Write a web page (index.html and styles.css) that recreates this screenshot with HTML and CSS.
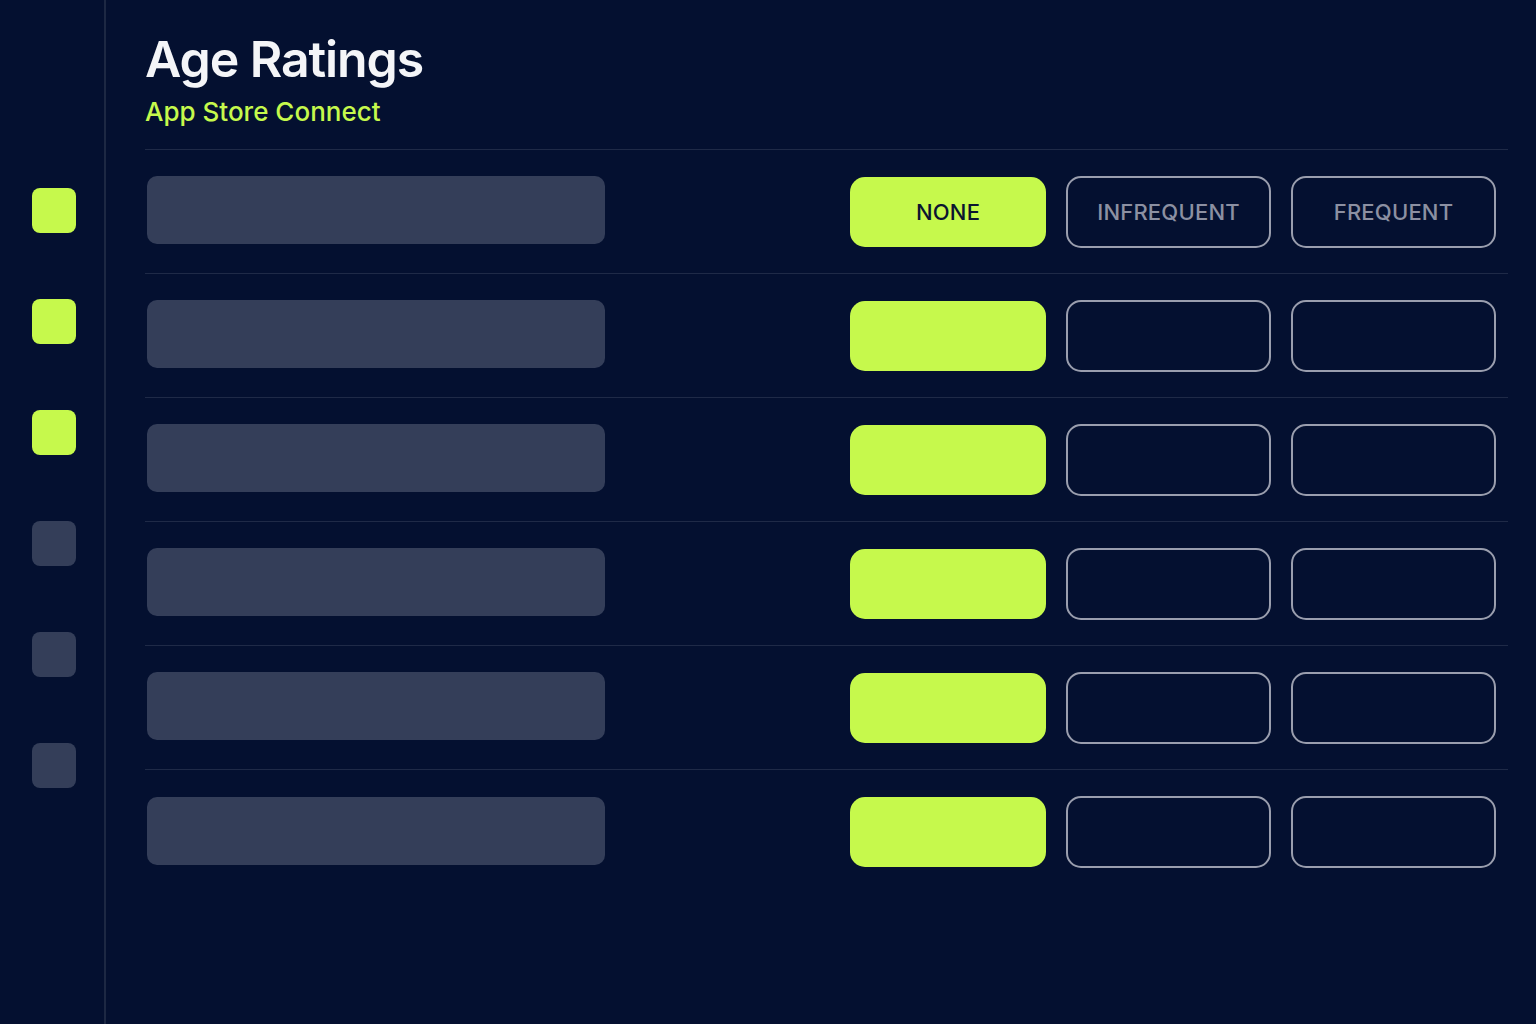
FILE: index.html
```html
<!DOCTYPE html>
<html>
<head>
<meta charset="utf-8">
<link rel="stylesheet" href="styles.css">
</head>
<body>
<div class="app">
  <aside class="sidebar">
    <div class="nav-sq on"></div>
    <div class="nav-sq on"></div>
    <div class="nav-sq on"></div>
    <div class="nav-sq"></div>
    <div class="nav-sq"></div>
    <div class="nav-sq"></div>
  </aside>
  <main class="main">
    <header class="header">
      <h1 class="title">Age Ratings</h1>
      <div class="subtitle">App Store Connect</div>
    </header>
    <section class="rows">
      <div class="row">
        <div class="bar"></div>
        <div class="opts">
          <div class="opt sel">NONE</div>
          <div class="opt out">INFREQUENT</div>
          <div class="opt out">FREQUENT</div>
        </div>
      </div>
      <div class="row">
        <div class="bar"></div>
        <div class="opts">
          <div class="opt sel"></div>
          <div class="opt out"></div>
          <div class="opt out"></div>
        </div>
      </div>
      <div class="row">
        <div class="bar"></div>
        <div class="opts">
          <div class="opt sel"></div>
          <div class="opt out"></div>
          <div class="opt out"></div>
        </div>
      </div>
      <div class="row">
        <div class="bar"></div>
        <div class="opts">
          <div class="opt sel"></div>
          <div class="opt out"></div>
          <div class="opt out"></div>
        </div>
      </div>
      <div class="row">
        <div class="bar"></div>
        <div class="opts">
          <div class="opt sel"></div>
          <div class="opt out"></div>
          <div class="opt out"></div>
        </div>
      </div>
      <div class="row last">
        <div class="bar"></div>
        <div class="opts">
          <div class="opt sel"></div>
          <div class="opt out"></div>
          <div class="opt out"></div>
        </div>
      </div>
    </section>
  </main>
</div>
</body>
</html>
```
FILE: styles.css
```css
* { box-sizing: border-box; }
html, body {
  margin: 0;
  padding: 0;
  width: 1536px;
  height: 1024px;
  overflow: hidden;
  background: #041030;
  font-family: Inter, "Noto Sans", sans-serif;
}
.app {
  display: flex;
  height: 1024px;
}
.sidebar {
  width: 106px;
  flex: none;
  border-right: 2px solid #1d2843;
  display: flex;
  flex-direction: column;
  align-items: flex-start;
  padding: 188px 0 0 32px;
  gap: 66px;
}
.nav-sq {
  width: 44px;
  height: 45px;
  border-radius: 8px;
  background: #343e59;
}
.nav-sq.on { background: #c6f94c; }
.main {
  flex: 1;
  padding: 0 28px 0 39px;
  display: flex;
  flex-direction: column;
}
.header {
  padding-top: 28px;
  height: 150px;
  border-bottom: 1px solid #1f2a47;
}
.title {
  margin: 0;
  font-size: 50px;
  line-height: 62px;
  font-weight: 600;
  color: #f4f5f8;
  letter-spacing: -1.1px;
}
.subtitle {
  margin-top: 5px;
  font-size: 26px;
  line-height: 34px;
  font-weight: 500;
  color: #c6f94c;
}
.rows { display: flex; flex-direction: column; }
.row {
  height: 124px;
  border-bottom: 1px solid #1f2a47;
  display: flex;
  align-items: center;
  justify-content: space-between;
  padding: 0 12px 0 2px;
}
.row.last { border-bottom: none; }
.bar {
  width: 458px;
  height: 68px;
  border-radius: 10px;
  background: #343e59;
  margin-bottom: 3px;
}
.opts {
  display: flex;
  align-items: center;
  gap: 20px;
}
.opt {
  height: 72px;
  border-radius: 15px;
  display: flex;
  align-items: center;
  justify-content: center;
  font-size: 22px;
  font-weight: 500;
  letter-spacing: 0.2px;
}
.opt.sel {
  width: 196px;
  height: 70px;
  background: #c6f94c;
  color: #0b1530;
}
.opt.out {
  width: 205px;
  border: 2px solid #9a9eae;
  color: #8c90a2;
}
```
